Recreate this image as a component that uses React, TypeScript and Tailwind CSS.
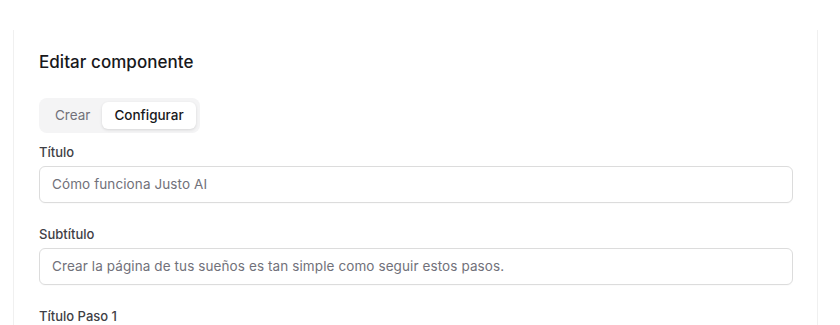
import { useState } from "react";

const FONT = { fontFamily: "Inter, 'Noto Sans', sans-serif" };

function Campo({ label, value }: { label: string; value: string }) {
  return (
    <div className="flex flex-col gap-[5px]">
      <label className="text-[13px] leading-[18px] font-medium text-[#3f3f46]">{label}</label>
      <div className="h-[37px] rounded-[6px] border border-[#dcdcdc] bg-white px-3 flex items-center text-[13.5px] tracking-[0.1px] text-[#71717a] shadow-[0_1px_1px_rgba(0,0,0,0.02)]">
        {value}
      </div>
    </div>
  );
}

export default function App() {
  const [tab, setTab] = useState<"crear" | "configurar">("configurar");

  return (
    <div className="w-[840px] h-[325px] bg-white overflow-hidden" style={FONT}>
      <div className="ml-[13px] mt-[30px] w-[805px] h-[400px] border-x border-[#f0f0f0] pl-[25px] pr-[24px] pt-[20px]">
        {/* Header */}
        <h2 className="text-[17px] leading-[24px] font-medium text-[#18181b] tracking-[0.05px]">
          Editar componente
        </h2>

        {/* Tabs */}
        <div className="mt-[24px] inline-flex items-center rounded-[8px] bg-[#f4f4f5] p-[4px] h-[35px]">
          <button
            onClick={() => setTab("crear")}
            className={`h-[27px] px-3 rounded-[6px] text-[13.5px] ${
              tab === "crear" ? "bg-white text-[#18181b] shadow-[0_1px_3px_rgba(0,0,0,0.12)]" : "text-[#71717a]"
            }`}
          >
            Crear
          </button>
          <button
            onClick={() => setTab("configurar")}
            className={`h-[27px] px-3 rounded-[6px] text-[13.5px] font-medium ${
              tab === "configurar" ? "bg-white text-[#18181b] shadow-[0_1px_3px_rgba(0,0,0,0.12)]" : "text-[#71717a]"
            }`}
          >
            Configurar
          </button>
        </div>

        {/* Campos */}
        <div className="mt-[10px] flex flex-col gap-[22px]">
          <Campo label="Título" value="Cómo funciona Justo AI" />
          <Campo
            label="Subtítulo"
            value="Crear la página de tus sueños es tan simple como seguir estos pasos."
          />
          <Campo label="Título Paso 1" value="" />
        </div>
      </div>
    </div>
  );
}
